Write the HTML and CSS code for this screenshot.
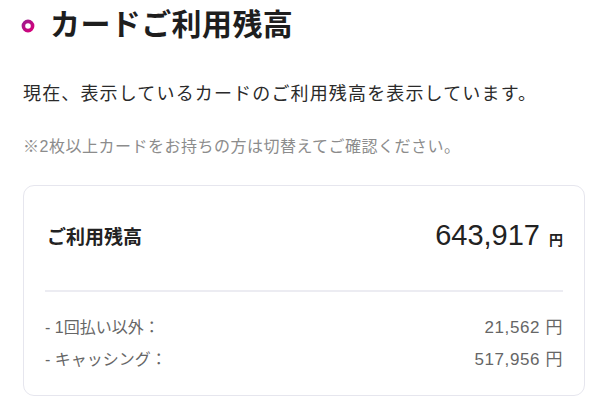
FILE: index.html
```html
<!DOCTYPE html>
<html lang="ja">
<head>
<meta charset="utf-8">
<title>カードご利用残高</title>
<link rel="stylesheet" href="styles.css">
</head>
<body>
<main class="page">
  <h1 class="title">
    <svg class="ring" width="14" height="14" viewBox="0 0 14 14" aria-hidden="true">
      <defs>
        <linearGradient id="rg" x1="0" y1="0" x2="1" y2="1">
          <stop offset="0" stop-color="#9e1a8e"/>
          <stop offset="1" stop-color="#d8007a"/>
        </linearGradient>
      </defs>
      <circle cx="7" cy="7" r="4.6" fill="none" stroke="url(#rg)" stroke-width="3.6"/>
    </svg>
    <span>カードご利用残高</span>
  </h1>
  <p class="lead">現在、表示しているカードのご利用残高を表示しています。</p>
  <p class="note">※2枚以上カードをお持ちの方は切替えてご確認ください。</p>
  <section class="card">
    <div class="total">
      <span class="total-label">ご利用残高</span>
      <span class="total-value"><span class="num">643,917</span><span class="yen">円</span></span>
    </div>
    <div class="divider"></div>
    <ul class="breakdown">
      <li class="row"><span class="row-label">- 1回払い以外：</span><span class="row-value">21,562 円</span></li>
      <li class="row"><span class="row-label">- キャッシング：</span><span class="row-value">517,956 円</span></li>
    </ul>
  </section>
</main>
</body>
</html>
```
FILE: styles.css
```css
html, body {
  margin: 0;
  padding: 0;
  background: #ffffff;
}
body {
  font-family: "Liberation Sans", "Noto Sans CJK JP", sans-serif;
  color: #222222;
}
.page {
  padding: 0 23px;
}
.title {
  display: flex;
  align-items: center;
  gap: 15px;
  margin: 0;
  padding-top: 7px;
  height: 36px;
  font-size: 30px;
  font-weight: 700;
  letter-spacing: 0.4px;
  color: #1e1e1e;
  line-height: 36px;
}
.ring {
  flex: none;
  margin-left: -2px;
  margin-top: 1px;
}
.lead {
  margin: 37px 0 0;
  font-size: 18px;
  letter-spacing: 1.15px;
  line-height: 28px;
  color: #2a2a2a;
}
.note {
  margin: 27px 0 0;
  font-size: 16px;
  letter-spacing: 0.5px;
  line-height: 24px;
  color: #8c8c8c;
}
.card {
  margin-top: 26px;
  border: 1px solid #e6e6ee;
  border-radius: 11px;
  padding: 0 21px;
  height: 209px;
  box-sizing: content-box;
}
.total {
  display: flex;
  justify-content: space-between;
  align-items: center;
  height: 98px;
  margin-bottom: 6px;
}
.total-label {
  font-size: 19px;
  font-weight: 700;
  color: #222222;
  padding-left: 2px;
}
.total-value {
  display: flex;
  align-items: baseline;
  gap: 9px;
}
.num {
  font-size: 29px;
  color: #222222;
}
.yen {
  font-size: 14px;
  font-weight: 700;
  color: #222222;
}
.divider {
  height: 2px;
  background: #ececf2;
}
.breakdown {
  list-style: none;
  margin: 0;
  padding: 20px 0 0;
}
.row {
  display: flex;
  justify-content: space-between;
  align-items: baseline;
  height: 32px;
  line-height: 32px;
  color: #666666;
}
.row-label {
  font-size: 16px;
}
.row-value {
  font-size: 17px;
  letter-spacing: 0.6px;
}
```
